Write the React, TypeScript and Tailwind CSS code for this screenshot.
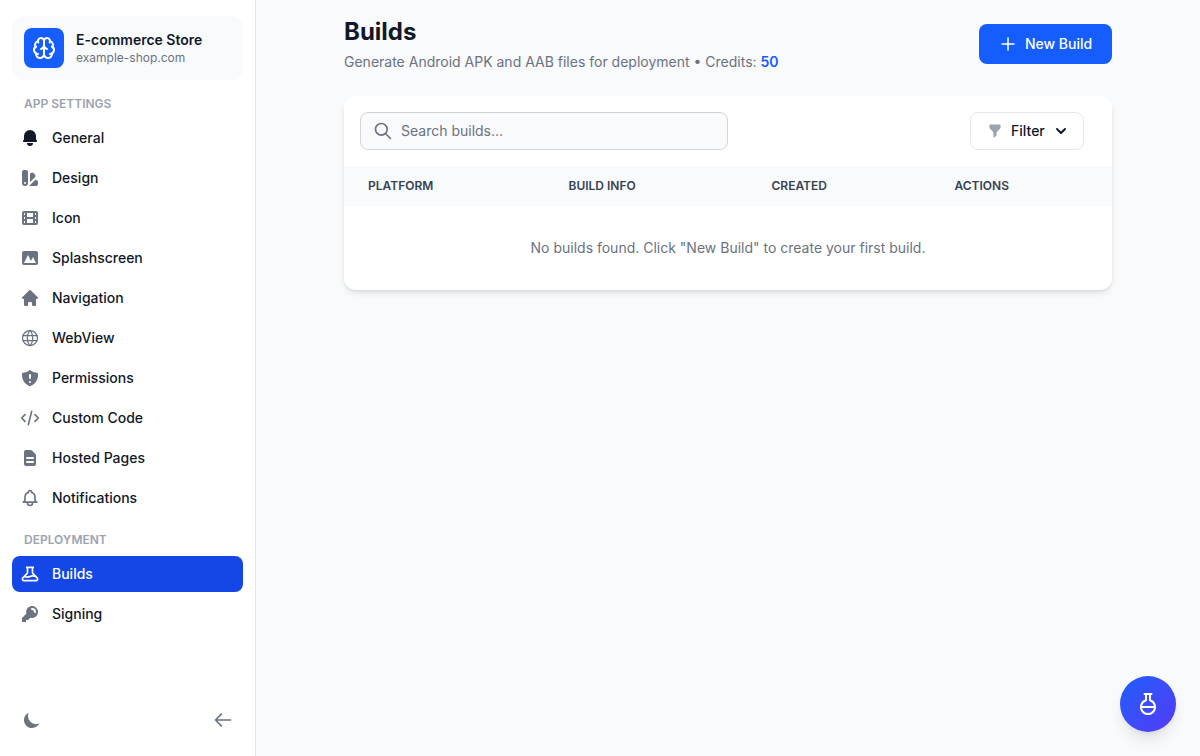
import { Brain, FlaskRound } from "lucide-react";
import {
  HiBell,
  HiColorSwatch,
  HiFilm,
  HiPhotograph,
  HiHome,
  HiShieldExclamation,
  HiDocumentText,
  HiOutlineBell,
  HiOutlineBeaker,
  HiKey,
  HiMoon,
  HiOutlineArrowLeft,
  HiFilter,
  HiChevronDown,
  HiOutlinePlus,
  HiOutlineSearch,
  HiOutlineCode,
} from "react-icons/hi";
import { TbWorld } from "react-icons/tb";

const settings = [
  { name: "General", icon: HiBell, active: true },
  { name: "Design", icon: HiColorSwatch },
  { name: "Icon", icon: HiFilm },
  { name: "Splashscreen", icon: HiPhotograph },
  { name: "Navigation", icon: HiHome },
  { name: "WebView", icon: TbWorld, iconProps: { strokeWidth: 1.5 } },
  { name: "Permissions", icon: HiShieldExclamation },
  { name: "Custom Code", icon: HiOutlineCode },
  { name: "Hosted Pages", icon: HiDocumentText },
  { name: "Notifications", icon: HiOutlineBell },
];

const App = () => {
  return (
    <div className="flex h-[756px] w-[1200px] overflow-hidden bg-[#f9fafb] font-['Inter',sans-serif] text-[#111827]">
      {/* Sidebar */}
      <aside className="flex w-[256px] shrink-0 flex-col border-r border-[#e5e7eb] bg-white px-3 pt-4 pb-[26px]">
        <div className="flex h-16 items-center gap-3 rounded-xl bg-[#f9fafb] px-3">
          <div className="flex h-10 w-10 items-center justify-center rounded-lg bg-[#155dfc] text-white">
            <Brain size={24} strokeWidth={2} />
          </div>
          <div>
            <div className="text-sm leading-5 font-semibold">E-commerce Store</div>
            <div className="text-xs leading-4 text-[#6b7280]">example-shop.com</div>
          </div>
        </div>

        <div className="mt-4 px-3 text-xs leading-4 font-semibold text-[#9ca3af]">APP SETTINGS</div>
        <nav className="mt-2 flex flex-col gap-1">
          {settings.map(({ name, icon: Icon, active, iconProps }) => (
            <a key={name} className="flex h-9 items-center gap-3 rounded-lg pl-2 text-sm leading-5 font-medium">
              <Icon size={20} {...iconProps} className={active ? "text-[#111827]" : "text-[#6b7280]"} />
              {name}
            </a>
          ))}
        </nav>

        <div className="mt-4 px-3 text-xs leading-4 font-semibold text-[#9ca3af]">DEPLOYMENT</div>
        <nav className="mt-2 flex flex-col gap-1">
          <a className="flex h-9 items-center gap-3 rounded-lg bg-[#1447e6] pl-2 text-sm leading-5 font-medium text-white">
            <HiOutlineBeaker size={20} />
            Builds
          </a>
          <a className="flex h-9 items-center gap-3 rounded-lg pl-2 text-sm leading-5 font-medium">
            <HiKey size={20} className="text-[#6b7280]" />
            Signing
          </a>
        </nav>

        <div className="mt-auto flex items-center justify-between px-2.5 text-[#6b7280]">
          <HiMoon size={20} />
          <HiOutlineArrowLeft size={20} />
        </div>
      </aside>

      {/* Main */}
      <main className="relative flex-1">
        <div className="mx-auto w-[768px]">
          <div className="flex items-start justify-between pt-4">
            <div>
              <h1 className="text-2xl leading-8 font-bold">Builds</h1>
              <p className="mt-1 text-sm leading-5 text-[#6b7280]">
                Generate Android APK and AAB files for deployment • Credits:{" "}
                <span className="font-semibold text-[#155dfc]">50</span>
              </p>
            </div>
            <button className="mt-2 flex h-10 w-[133px] items-center justify-center gap-2 rounded-lg bg-[#155dfc] text-sm font-medium text-white">
              <HiOutlinePlus size={18} />
              New Build
            </button>
          </div>

          <div className="mt-[24px] overflow-hidden rounded-xl bg-white shadow-md">
            <div className="flex items-center justify-between pt-4 pr-7 pb-4 pl-4">
              <div className="flex h-[38px] w-[368px] items-center gap-2 rounded-lg border border-[#d1d5db] bg-[#f9fafb] pl-3 text-sm text-[#6b7280]">
                <HiOutlineSearch size={20} />
                Search builds...
              </div>
              <button className="flex h-[38px] w-[114px] items-center gap-2 rounded-lg border border-[#e5e7eb] bg-white pl-4 text-sm font-medium">
                <HiFilter size={16} className="text-[#9ca3af]" />
                Filter
                <HiChevronDown size={20} className="-ml-0.5" />
              </button>
            </div>
            <div className="grid h-10 grid-cols-[200.5px_203px_183px_1fr] items-center bg-[#f9fafb] pl-6 text-xs font-semibold text-[#374151]">
              <div>PLATFORM</div>
              <div>BUILD INFO</div>
              <div>CREATED</div>
              <div>ACTIONS</div>
            </div>
            <div className="flex h-[84px] items-center justify-center text-sm text-[#6b7280]">
              No builds found. Click "New Build" to create your first build.
            </div>
          </div>
        </div>

        {/* Floating button */}
        <button className="absolute right-6 bottom-6 flex h-14 w-14 items-center justify-center rounded-full bg-gradient-to-br from-[#155dfc] to-[#4f39f6] text-white shadow-lg">
          <FlaskRound size={24} strokeWidth={2} />
        </button>
      </main>
    </div>
  );
};

export default App;
